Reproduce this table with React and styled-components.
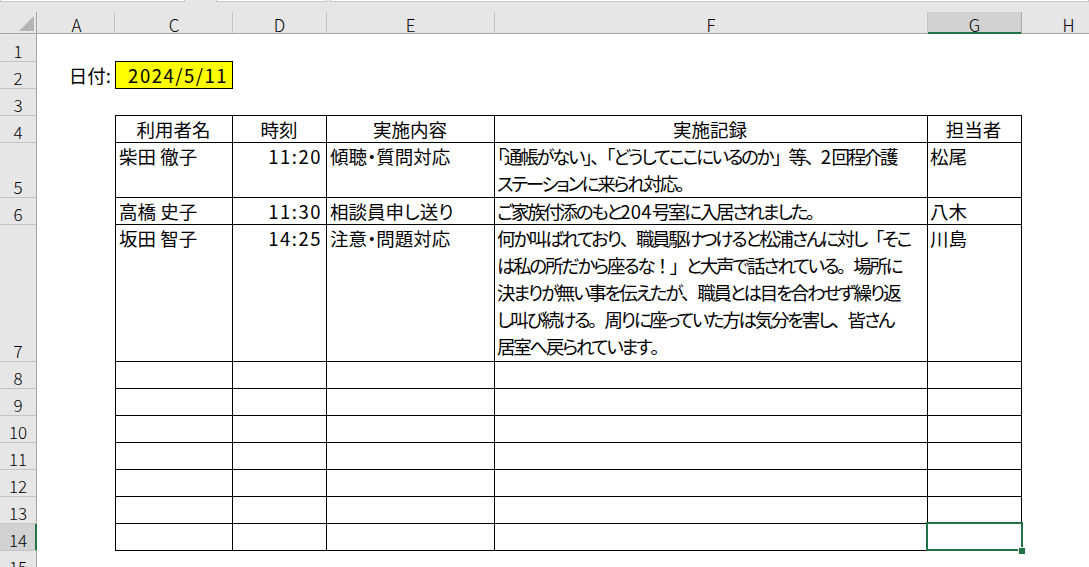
import React from 'react';
import styled, { createGlobalStyle, css } from 'styled-components';

const GREEN = '#217346';
const HEAD_BG = '#e6e6e6';
const HEAD_ACTIVE = '#d2d2d2';
const HEAD_LINE = '#c3c3c3';
const HEAD_EDGE = '#a5a5a5';
const JP = '"Noto Sans CJK JP", "Noto Sans", sans-serif';

const GlobalStyle = createGlobalStyle`
  html, body { margin: 0; padding: 0; background: #ffffff; overflow: hidden; }
  body { font-family: ${JP}; color: #000000; }
`;

const Window = styled.div`
  width: 1089px;
  height: 567px;
  overflow: hidden;
  background: #ffffff;
  display: flex;
  flex-direction: column;
`;

const TopStrip = styled.div`
  flex: none;
  height: 12px;
  background: ${HEAD_BG};
  display: flex;
  align-items: flex-start;
`;

const TopField = styled.div`
  flex: ${p => (p.$grow ? '1' : 'none')};
  width: ${p => (p.$w ? `${p.$w}px` : 'auto')};
  margin-left: ${p => p.$ml || 0}px;
  height: 1px;
  background: #ffffff;
  border: 1px solid #c6c6c6;
  border-top: none;
`;

const Sheet = styled.div`
  flex: none;
  display: grid;
  width: 1116px;
  grid-template-columns: 37px 79px 117px 94px 168px 433px 94px 94px;
  grid-template-rows: 22px 28px 27px 27px 27px 55px 27px 137px repeat(8, 27px);
`;

const Corner = styled.div`
  box-sizing: border-box;
  background: ${HEAD_BG};
  border-right: 1px solid ${HEAD_EDGE};
  border-bottom: 1px solid ${HEAD_EDGE};
  display: flex;
  align-items: flex-end;
  justify-content: flex-end;
  padding: 0 2px 2px 0;
`;

const ColHead = styled.div`
  position: relative;
  box-sizing: border-box;
  background: ${p => (p.$active ? HEAD_ACTIVE : HEAD_BG)};
  border-right: 1px solid ${p => (p.$active ? '#ababab' : HEAD_LINE)};
  border-bottom: 1px solid ${p => (p.$active ? GREEN : HEAD_EDGE)};
  box-shadow: ${p => (p.$active ? `inset 0 -1px 0 ${GREEN}` : 'none')};
  display: flex;
  align-items: center;
  justify-content: center;
  padding-top: 3px;
  font-family: ${JP};
  font-size: 17px;
  font-weight: 300;
  line-height: 1;
  ${p =>
    p.$hiddenNext &&
    css`
      border-right: none;
      &::after {
        content: '';
        position: absolute;
        top: 0;
        bottom: 0;
        right: -3px;
        width: 5px;
        box-sizing: border-box;
        border-left: 1px solid ${HEAD_LINE};
        border-right: 1px solid ${HEAD_LINE};
      }
    `}
`;

const RowHead = styled.div`
  box-sizing: border-box;
  background: ${p => (p.$active ? HEAD_ACTIVE : HEAD_BG)};
  border-right: 1px solid ${p => (p.$active ? GREEN : HEAD_EDGE)};
  box-shadow: ${p => (p.$active ? `inset -1px 0 0 ${GREEN}` : 'none')};
  border-bottom: 1px solid ${HEAD_LINE};
  display: flex;
  align-items: flex-end;
  justify-content: center;
  padding-bottom: 2px;
  font-family: ${JP};
  font-size: 17px;
  font-weight: 300;
  line-height: 1;
`;

const Cell = styled.div`
  position: relative;
  box-sizing: border-box;
  min-width: 0;
  white-space: nowrap;
  font-family: ${JP};
  font-size: 18.5px;
  line-height: 27px;
  font-feature-settings: "palt" 1;
  letter-spacing: ${p => (p.$num ? '1.5px' : '0')};
  padding: 0 ${p => p.$pr ?? 4}px 0 ${p => p.$pl ?? 3}px;
  text-align: ${p => p.$align || 'left'};
`;

const TableCell = styled(Cell)`
  border-right: 1px solid #000000;
  border-bottom: 1px solid #000000;
  background: ${p => p.$fill || 'transparent'};
  ${p => p.$first && css`margin-left: -1px; border-left: 1px solid #000000;`}
  ${p => p.$top && css`margin-top: -1px; border-top: 1px solid #000000;`}
`;

const Line = styled.span`
  display: block;
  letter-spacing: -2.3px;
`;

const Punct = styled.span`
  font-feature-settings: normal;
`;

const Digits = styled.span`
  letter-spacing: 0.3px;
`;

const Selection = styled.div`
  position: absolute;
  top: -2px;
  left: -2px;
  right: -2px;
  bottom: -1px;
  border: 2px solid ${GREEN};
  pointer-events: none;
`;

const FillHandle = styled.div`
  position: absolute;
  right: -4px;
  bottom: -4px;
  width: 6px;
  height: 6px;
  background: ${GREEN};
  border-left: 1px solid #ffffff;
  border-top: 1px solid #ffffff;
`;

const COLUMNS = ['A', 'C', 'D', 'E', 'F', 'G', 'H'];
const TABLE_COLS = ['C', 'D', 'E', 'F', 'G'];
const ALIGN = { C: 'left', D: 'right', E: 'left', F: 'left', G: 'left' };
const PAD_LEFT = { C: 3, D: 3, E: 3, F: 2, G: 2 };
const HEADER = { C: '利用者名', D: '時刻', E: '実施内容', F: '実施記録', G: '担当者' };

const RECORDS = {
  5: {
    C: '柴田 徹子',
    D: '11:20',
    E: '傾聴・質問対応',
    F: ['「通帳がない」、「どうしてここにいるのか」等、2回程介護', 'ステーションに来られ対応。'],
    G: '松尾',
  },
  6: {
    C: '高橋 史子',
    D: '11:30',
    E: '相談員申し送り',
    F: ['ご家族付添のもと204号室に入居されました。'],
    G: '八木',
  },
  7: {
    C: '坂田 智子',
    D: '14:25',
    E: '注意・問題対応',
    F: [
      '何か叫ばれており、職員駆けつけると松浦さんに対し「そこ',
      'は私の所だから座るな！」と大声で話されている。場所に',
      '決まりが無い事を伝えたが、職員とは目を合わせず繰り返',
      'し叫び続ける。周りに座っていた方は気分を害し、皆さん',
      '居室へ戻られています。',
    ],
    G: '川島',
  },
};

const ROWS = Array.from({ length: 15 }, (_, i) => i + 1);
const ACTIVE_ROW = 14;
const ACTIVE_COL = 'G';
const RUNS = /([「」、。！]|[0-9]+)/;
const PUNCT = /^[「」、。！]$/;
const DIGITS = /^[0-9]+$/;

function CornerTriangle() {
  return (
    <svg width="15" height="15" viewBox="0 0 15 15">
      <polygon points="15,0 15,15 0,15" fill="#b4b4b4" />
    </svg>
  );
}

function richText(text) {
  return text
    .split(RUNS)
    .filter(Boolean)
    .map((s, i) => {
      if (DIGITS.test(s)) return <Digits key={i}>{s}</Digits>;
      if (PUNCT.test(s) && !(i === 0 && s === '「')) return <Punct key={i}>{s}</Punct>;
      return <React.Fragment key={i}>{s}</React.Fragment>;
    });
}

function renderContent(value) {
  if (Array.isArray(value)) {
    return value.map((l, i) => <Line key={i}>{richText(l)}</Line>);
  }
  return value;
}

function TableRowCells({ row }) {
  const isHeader = row === 4;
  const rec = RECORDS[row] || {};
  return TABLE_COLS.map(col => {
    const selected = row === ACTIVE_ROW && col === ACTIVE_COL;
    return (
      <TableCell
        key={col}
        $first={col === 'C'}
        $top={isHeader}
        $align={isHeader ? 'center' : ALIGN[col]}
        $pl={PAD_LEFT[col]}
        $num={col === 'D' && !isHeader}
      >
        {isHeader ? HEADER[col] : renderContent(rec[col])}
        {selected && (
          <>
            <Selection />
            <FillHandle />
          </>
        )}
      </TableCell>
    );
  });
}

function DateRowCells() {
  return TABLE_COLS.map(col =>
    col === 'C' ? (
      <TableCell key={col} $first $top $fill="#ffff00" $align="right" $num>
        2024/5/11
      </TableCell>
    ) : (
      <Cell key={col} />
    )
  );
}

export default function App() {
  return (
    <>
      <GlobalStyle />
      <Window>
        <TopStrip>
          <TopField $w={183} />
          <TopField $w={109} $ml={31} />
          <TopField $grow $ml={3} />
        </TopStrip>
        <Sheet>
          <Corner>
            <CornerTriangle />
          </Corner>
          {COLUMNS.map(c => (
            <ColHead key={c} $active={c === ACTIVE_COL} $hiddenNext={c === 'A'}>
              {c}
            </ColHead>
          ))}
          {ROWS.map(r => (
            <React.Fragment key={r}>
              <RowHead $active={r === ACTIVE_ROW}>{r}</RowHead>
              <Cell $align="right" $pr={5}>
                {r === 2 ? '日付:' : null}
              </Cell>
              {r === 2 ? (
                <DateRowCells />
              ) : r >= 4 && r <= 14 ? (
                <TableRowCells row={r} />
              ) : (
                TABLE_COLS.map(c => <Cell key={c} />)
              )}
              <Cell />
            </React.Fragment>
          ))}
        </Sheet>
      </Window>
    </>
  );
}
